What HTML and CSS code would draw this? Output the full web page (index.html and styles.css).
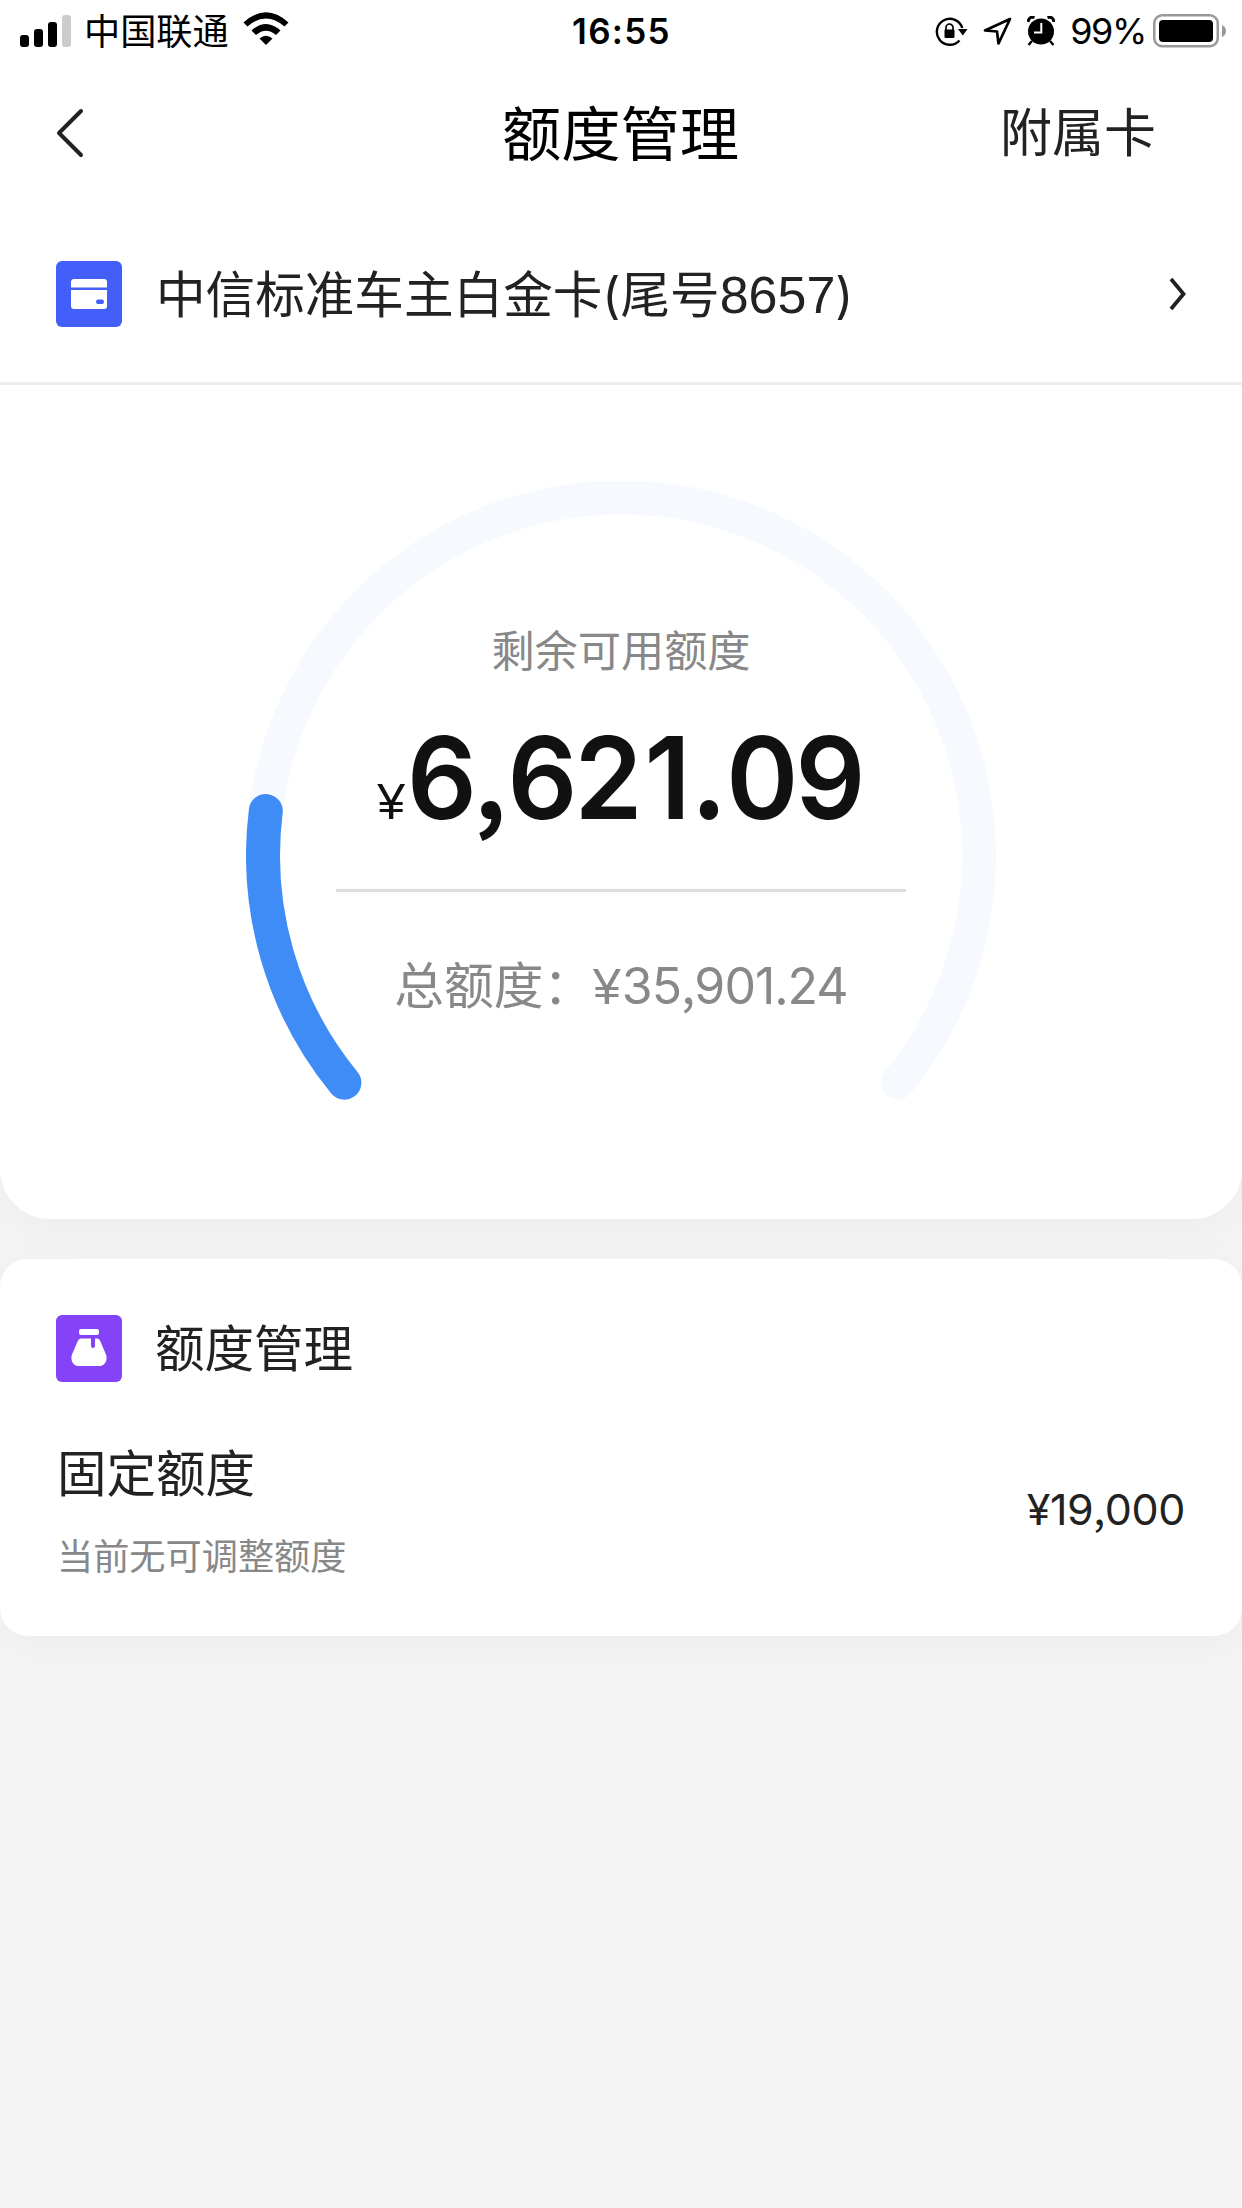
FILE: index.html
```html
<!DOCTYPE html>
<html lang="zh-CN">
<head>
<meta charset="utf-8">
<title>额度管理</title>
<link rel="stylesheet" href="styles.css">
</head>
<body>
<main class="panel">
  <div class="status">
    <div class="status-left">
      <svg class="signal" width="52" height="34" viewBox="0 0 52 34">
        <rect x="0" y="20" width="9" height="12" rx="3"/>
        <rect x="14" y="14" width="9" height="18" rx="3"/>
        <rect x="28" y="7" width="9" height="25" rx="3"/>
        <rect x="42" y="0" width="9" height="32" rx="3" fill="#ccc"/>
      </svg>
      <span class="carrier">中国联通</span>
      <svg class="wifi" width="46" height="34" viewBox="0 0 46 34">
        <path d="M0.5 10.5Q23 -10 45.500 10.500L41.500 14.500Q23 -1.500 4.500 14.500Z"/>
        <path d="M8.500 18.500Q23 5.500 37.500 18.500L33 23Q23 14.500 13 23Z"/>
        <path d="M16.500 26.500Q23 21 29.500 26.500L23 33Z"/>
      </svg>
    </div>
    <time class="clock">16:55</time>
    <div class="status-right">
      <svg class="lock" width="34" height="32" viewBox="0 0 34 32">
        <path d="M24.500 24.500A13 13 0 1 1 27.300 12" fill="none" stroke="#000" stroke-width="2.400"/>
        <path d="M23 13H32.500L27.800 19.500Z"/>
        <rect x="9.500" y="13.500" width="10" height="8.500" rx="1"/>
        <path d="M11 14V11.500A3.500 3.500 0 0 1 18 11.500V14" fill="none" stroke="#000" stroke-width="1.700"/>
      </svg>
      <svg class="locate" width="29" height="30" viewBox="0 0 29 30">
        <path d="M27 2L2 13.500L14 14.500L15.500 26.500Z" fill="none" stroke="#000" stroke-width="2.700" stroke-linejoin="round"/>
      </svg>
      <svg class="alarm" width="28" height="30" viewBox="0 0 28 30">
        <circle cx="14" cy="15.500" r="13"/>
        <path d="M1 6Q2 0 7.500 1.500M20.500 1.500Q26 0 27 6" fill="none" stroke="#000" stroke-width="3"/>
        <path d="M5 25L1.500 29M23 25L26.500 29" stroke="#000" stroke-width="2.400"/>
        <path d="M14.300 7V16.500H7" fill="none" stroke="#fff" stroke-width="2"/>
      </svg>
      <span class="percent">99%</span>
      <svg class="battery" width="74" height="34" viewBox="0 0 74 34">
        <rect x="1.250" y="1.250" width="63.500" height="31" rx="8" fill="none" stroke="#999" stroke-width="2.500"/>
        <rect x="6" y="6" width="54" height="22" rx="4"/>
        <path d="M69 11Q73 13 73 17Q73 21 69 23Z" fill="#999"/>
      </svg>
    </div>
  </div>

  <header class="nav">
    <svg class="back" width="28" height="50" viewBox="0 0 28 50"><path d="M25 3L3 25L25 47" fill="none" stroke="#222" stroke-width="4" stroke-linecap="round" stroke-linejoin="round"/></svg>
    <h1 class="title">额度管理</h1>
    <span class="action">附属卡</span>
  </header>

  <section class="account">
    <svg class="tile" width="66" height="66" viewBox="0 0 66 66">
      <rect width="66" height="66" rx="6" fill="#445efa"/>
      <path d="M15 26.500V21Q15 18 18 18H48Q51 18 51 21V26.500ZM15 29H51V45Q51 48 48 48H18Q15 48 15 45Z" fill="#fff"/>
      <rect x="40" y="38.500" width="8" height="4.500" rx="2.250" fill="#445efa"/>
    </svg>
    <span class="account-name">中信标准车主白金卡(尾号<span class="tail">8657</span>)</span>
    <svg class="next" width="20" height="34" viewBox="0 0 20 34"><path d="M3 2L15.500 17L3 32" fill="none" stroke="#222" stroke-width="3.800"/></svg>
  </section>

  <section class="gauge">
    <svg class="dial" width="750" height="750" viewBox="0 0 750 750">
      <path class="track" d="M98.400 601.700A358 358 0 1 1 651.600 601.700"/>
      <path class="value" d="M98.400 601.700A358 358 0 0 1 19.800 330"/>
    </svg>
    <div class="figures">
      <p class="caption">剩余可用额度</p>
      <p class="available"><span class="yen">¥</span><span class="amount">6<span class="mark">,</span>62<span class="one">1</span><span class="mark">.</span>09</span></p>
      <p class="total"><span>总额度：</span><span class="yen">¥</span><span class="total-number">35<span class="mark">,</span>901<span class="mark">.</span>24</span></p>
    </div>
  </section>
</main>

<section class="card">
  <div class="card-head">
    <svg class="tile" width="66" height="67" viewBox="0 0 66 67">
      <rect width="66" height="67" rx="6" fill="#8543f7"/>
      <rect x="23" y="14" width="20" height="6" rx="2" fill="#fff"/>
      <path d="M25 23.500H35V31Q35 33 37 33Q39 33 39 31V23.500H41Q43 23.500 44 25.500L50 39.500C52 45 49 51 43.500 51H22.500C17 51 14 45 16 39.500L22 25.500Q23 23.500 25 23.500Z" fill="#fff"/>
    </svg>
    <h2 class="card-title">额度管理</h2>
  </div>
  <div class="row">
    <div class="row-text">
      <p class="row-name">固定额度</p>
      <p class="row-note">当前无可调整额度</p>
    </div>
    <span class="row-amount">¥19<span class="mark">,</span>000</span>
  </div>
</section>
</body>
</html>
```
FILE: styles.css
```css
* { box-sizing: border-box; }
body {
  margin: 0;
  min-height: 2208px;
  background: #f4f4f4;
  color: #222;
  font-family: Inter, "Noto Sans CJK SC", sans-serif;
}
h1, h2, p { margin: 0; font-weight: 400; }
svg { display: block; flex: none; }
span, time { white-space: nowrap; }
.mark { font-family: "Noto Sans CJK SC", sans-serif; line-height: 1; }

.panel {
  height: 1219px;
  background: #fff;
  border-radius: 0 0 50px 50px;
  box-shadow: 0 8px 50px rgba(0, 0, 0, .035);
}

.status {
  display: grid;
  grid-template-columns: 1fr auto 1fr;
  height: 62px;
  padding: 0 15px 0 20px;
  color: #000;
  line-height: 62px;
}
.status-left, .status-right { display: flex; align-items: center; height: 62px; }
.status-right { justify-content: flex-end; }
.signal { margin-top: 1px; }
.carrier { margin-left: 12px; padding-top: 2px; font-size: 36.2px; }
.wifi { margin: -4px 0 0 14px; }
.clock { padding-right: 4px; font-size: 35px; font-weight: 600; letter-spacing: 1.3px; }
.lock { margin-top: 1px; }
.locate { margin-left: 14px; margin-top: 1px; }
.alarm { margin-left: 15px; }
.percent { margin-left: 15px; font-size: 36px; letter-spacing: -1.4px; }
.battery { margin-left: 7px; margin-top: -1px; }

.nav {
  display: grid;
  grid-template-columns: 1fr auto 1fr;
  align-items: center;
  height: 142px;
  padding: 0 86px 0 56px;
}
.title { padding: 2px 0 0 29px; color: #000; font-size: 59.3px; line-height: 139px; }
.action { justify-self: end; padding-top: 1px; font-size: 52px; line-height: 139px; }

.account {
  display: flex;
  align-items: center;
  height: 181px;
  padding: 1px 54px 0 56px;
  border-bottom: 3px solid #ededed;
}
.account-name { margin-left: 34px; padding-top: 3px; font-size: 49.6px; line-height: 174px; }
.tail { font-family: "Liberation Sans", sans-serif; font-size: 52px; line-height: 1; }
.next { margin-left: auto; }

.gauge { display: grid; justify-content: center; padding-top: 96px; }
.dial, .figures { grid-area: 1 / 1; }
.track, .value { fill: none; stroke-width: 34px; stroke-linecap: round; }
.track { stroke: #f6faff; }
.value { stroke: #3f8cf7; }
.figures { justify-self: center; width: 570px; padding-top: 138px; text-align: center; }
.caption { color: #888; font-size: 43.2px; line-height: 64px; }
.available {
  display: flex;
  justify-content: center;
  align-items: baseline;
  height: 209px;
  border-bottom: 3px solid #ddd;
  color: #111;
  line-height: 190px;
}
.yen { font-family: "Liberation Sans", sans-serif; font-size: 50px; }
.amount {
  margin: 0 -18px 0 2px;
  font-size: 114px;
  font-weight: 600;
  letter-spacing: -2.9px;
  transform: scaleX(.958);
  transform-origin: left center;
}
.amount .mark { font-size: 104px; font-weight: 700; letter-spacing: 1px; }
.one { padding: 0 5px; }
.total {
  display: flex;
  justify-content: center;
  align-items: baseline;
  color: #888;
  font-size: 49.7px;
  line-height: 188px;
}
.total-number { margin-left: 1px; font-size: 50px; letter-spacing: -.9px; }

.card {
  height: 377px;
  margin-top: 40px;
  padding: 56px 57px 0 56px;
  background: #fff;
  border-radius: 28px;
  box-shadow: 0 8px 50px rgba(0, 0, 0, .035);
}
.card-head { display: flex; align-items: center; height: 67px; }
.card-title { margin-left: 33px; padding-top: 2px; font-size: 49.5px; line-height: 65px; }
.row { display: flex; justify-content: space-between; padding: 56px 0 0 1px; }
.row-name { font-size: 49.5px; line-height: 72px; }
.row-note { margin-top: 20px; color: #888; font-size: 36.2px; line-height: 54px; }
.row-amount { font-size: 43px; line-height: 142px; letter-spacing: -.4px; }
```
